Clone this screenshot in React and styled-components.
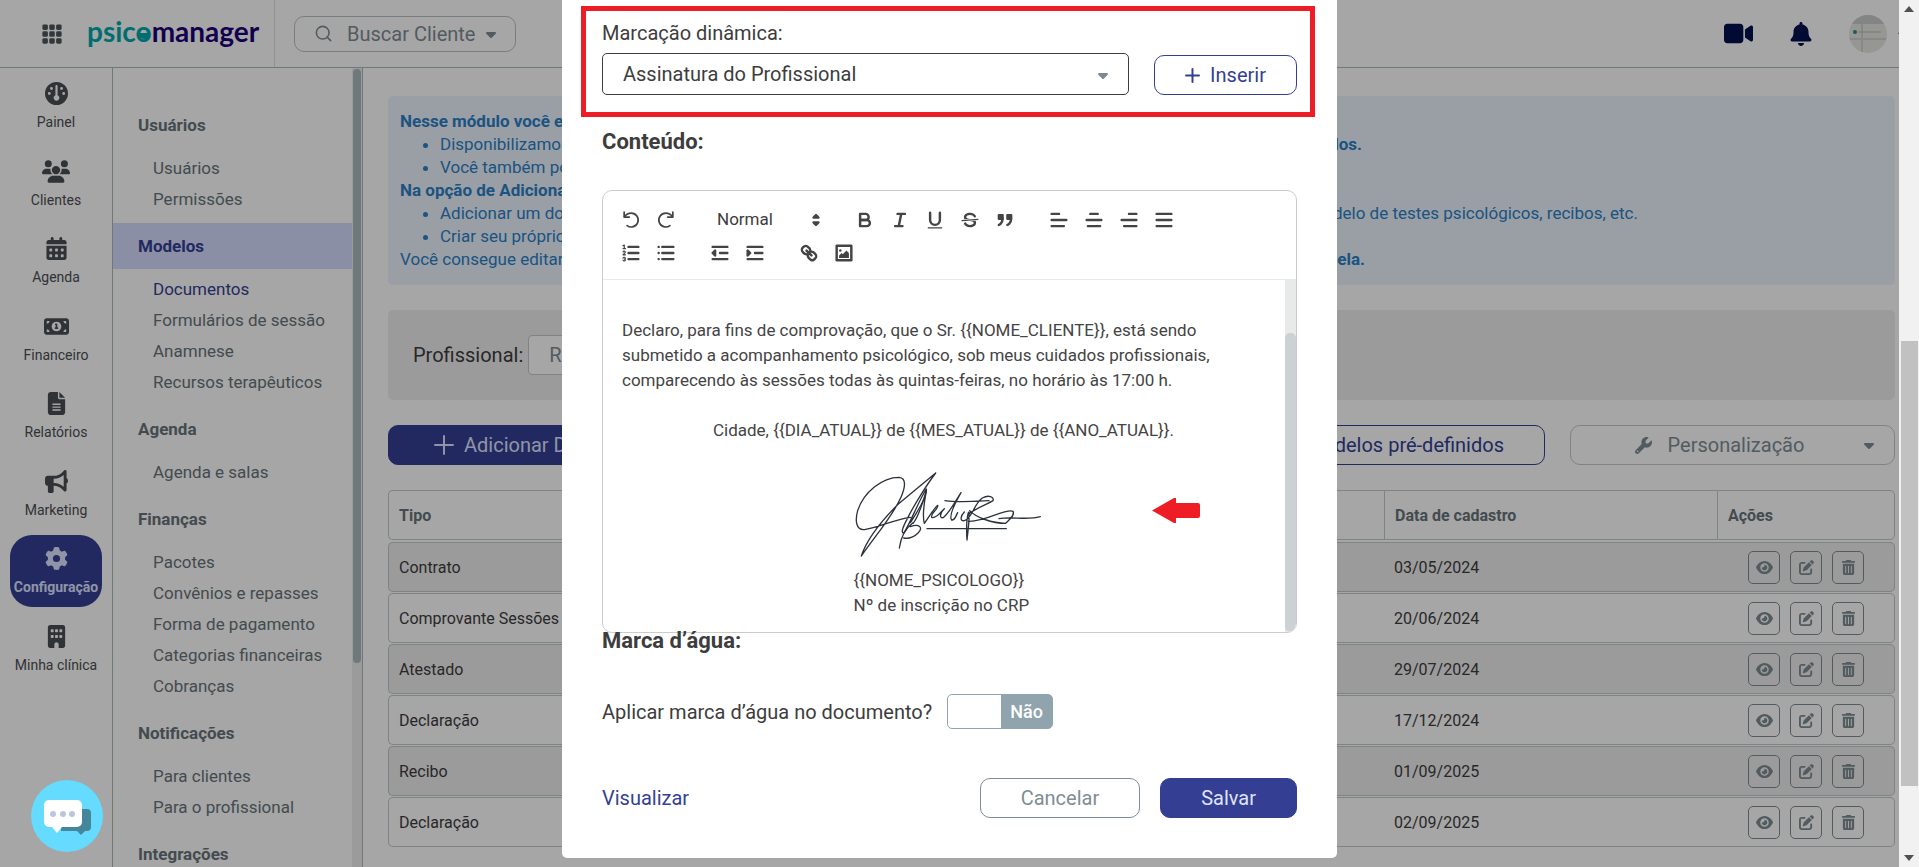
import { useState } from "react";
import styled, { createGlobalStyle, css } from "styled-components";
import {
  FaBell,
  FaBuilding,
  FaBullhorn,
  FaCalendarDays,
  FaCaretDown,
  FaEye,
  FaFileLines,
  FaGauge,
  FaGear,
  FaMoneyBill1,
  FaPenToSquare,
  FaTrashCan,
  FaUsers,
  FaVideo,
  FaWrench,
} from "react-icons/fa6";
import { BsGrid3X3GapFill } from "react-icons/bs";
import { FiSearch } from "react-icons/fi";

const colors = {
  navy: "#343f94",
  text: "#3d3d3d",
  muted: "#7f8d94",
  line: "#c2c9cc",
  menu: "#68747a",
  info: "#2b80c6",
};

const GlobalStyle = createGlobalStyle`
  * {
    box-sizing: border-box;
  }
  body {
    margin: 0;
    font-family: Roboto, "Liberation Sans", sans-serif;
    color: ${colors.text};
    background: #fff;
    overflow: hidden;
  }
  h2, h3, p, ul {
    margin: 0;
    padding: 0;
  }
  button, select, input {
    font-family: inherit;
    color: inherit;
  }
  button {
    cursor: pointer;
  }
  a {
    text-decoration: none;
  }
`;

const Window = styled.div`
  display: flex;
  height: 100vh;
`;

const Page = styled.div`
  position: relative;
  flex: 1;
  min-width: 0;
  display: flex;
  flex-direction: column;
  overflow: hidden;
`;

/* ---------- window scrollbar ---------- */

const PageScroll = styled.div`
  width: 20px;
  background: #f1f1f1;
  display: flex;
  flex-direction: column;
  justify-content: space-between;
  align-items: center;
  padding: 6px 0;
`;

const PageThumb = styled.div`
  width: 17px;
  height: 52%;
  margin-top: 329px;
  margin-bottom: auto;
  background: #c1c1c1;
`;

const ScrollArrow = styled.svg`
  width: 10px;
  height: 6px;
  fill: #505050;
`;

/* ---------- header ---------- */

const TopBar = styled.header`
  display: flex;
  align-items: center;
  height: 68px;
  flex-shrink: 0;
  border-bottom: 1px solid #abb8bd;
`;

const Brand = styled.div`
  display: flex;
  align-items: center;
  align-self: stretch;
  gap: 24px;
  width: 275px;
  padding-left: 41px;
  border-right: 1px solid #dde1e3;
`;

const LogoText = styled.div`
  padding-bottom: 6px;
  font-family: Lato, sans-serif;
  font-size: 28px;
  font-weight: 700;
  line-height: 36px;
  color: #1d007a;
`;

const LogoAccent = styled.span`
  color: #00a9ad;
`;

/* the "o" has the lower half of its bowl filled */
const LogoBowl = styled.span`
  position: relative;
  &::after {
    content: "";
    position: absolute;
    left: 3px;
    bottom: 9px;
    width: 11px;
    height: 6px;
    border-radius: 0 0 6px 6px;
    background: #00a9ad;
  }
`;

const PlainButton = styled.button`
  display: flex;
  padding: 0;
  border: none;
  background: none;
  color: ${(p) => p.$color || "#4d5659"};
`;

const SearchButton = styled.button`
  display: flex;
  align-items: center;
  width: 222px;
  height: 36px;
  margin-left: 19px;
  padding: 0 19px;
  border: 1px solid #b9c2c5;
  border-radius: 10px;
  background: none;
  color: ${colors.muted};
  font-size: 20px;
  white-space: nowrap;
  span {
    margin: 0 8px 0 14px;
  }
  svg {
    flex-shrink: 0;
  }
`;

const TopActions = styled.div`
  display: flex;
  align-items: center;
  gap: 36px;
  margin-left: auto;
`;

const Avatar = styled.svg`
  width: 38px;
  height: 38px;
  border-radius: 50%;
`;

const AvatarGroup = styled.div`
  display: flex;
  align-items: center;
  gap: 9px;
  width: 50px;
  overflow: hidden;
  svg {
    flex-shrink: 0;
  }
`;

/* ---------- side navigation ---------- */

const Body = styled.div`
  display: flex;
  flex: 1;
  min-height: 0;
`;

const NavRail = styled.nav`
  width: 113px;
  flex-shrink: 0;
  padding: 2px 10px;
  border-right: 1px solid #abb8bd;
`;

const NavList = styled.ul`
  height: 615px;
  display: flex;
  flex-direction: column;
  justify-content: space-between;
  list-style: none;
`;

const NavLink = styled.a`
  display: flex;
  flex-direction: column;
  align-items: center;
  gap: 8px;
  height: 72px;
  padding-top: 12px;
  border-radius: 22px;
  font-size: 14px;
  line-height: 18px;
  white-space: nowrap;
  color: #4a4f52;
  svg {
    height: 23px;
  }
  ${(p) =>
    p.$active &&
    css`
      background: ${colors.navy};
      color: #dfe3ff;
      font-weight: 700;
    `}
`;

const SubMenu = styled.aside`
  display: flex;
  width: 250px;
  flex-shrink: 0;
  border-right: 1px solid #abb8bd;
`;

const SubMenuBody = styled.div`
  flex: 1;
  padding-top: 34px;
`;

const MenuTitle = styled.h2`
  padding-left: 25px;
  font-size: 17px;
  font-weight: 700;
  line-height: 46px;
  color: ${(p) => (p.$active ? colors.navy : colors.menu)};
  background: ${(p) => (p.$active ? "#d6dcff" : "none")};
`;

const MenuList = styled.ul`
  padding: 5px 0 8px;
  list-style: none;
`;

const MenuLink = styled.a`
  display: block;
  padding-left: 40px;
  font-size: 17px;
  line-height: 31px;
  color: ${(p) => (p.$active ? colors.navy : colors.menu)};
`;

const SubMenuTrack = styled.div`
  width: 10px;
  padding: 1px 1px 0;
  background: #efefef;
`;

const SubMenuThumb = styled.div`
  height: 594px;
  border-radius: 4px;
  background: #abb8bd;
`;

/* ---------- main area ---------- */

const Main = styled.main`
  flex: 1;
  min-width: 0;
  display: flex;
  flex-direction: column;
  gap: 25px;
  padding: 28px 4px 0 25px;
`;

const InfoBox = styled.div`
  padding: 14px 12px;
  border-radius: 5px;
  background: #edf5ff;
  color: ${colors.info};
  font-size: 17px;
  line-height: 23px;
  ul {
    padding-left: 40px;
  }
`;

const InfoLine = styled.div`
  display: flex;
  justify-content: space-between;
  max-width: ${(p) => p.$width}px;
`;

const FilterBox = styled.div`
  display: flex;
  align-items: center;
  gap: 5px;
  height: 90px;
  padding: 0 25px;
  border-radius: 5px;
  background: #efefef;
  font-size: 20px;
`;

const FilterSelect = styled.select`
  appearance: none;
  width: 420px;
  height: 40px;
  padding: 0 20px;
  border: 1px solid ${colors.line};
  border-radius: 4px;
  background: #fff;
  color: ${colors.muted};
  font-size: 20px;
`;

const Actions = styled.div`
  display: flex;
  gap: 25px;
`;

const Button = styled.button`
  display: flex;
  align-items: center;
  justify-content: center;
  gap: 10px;
  height: 40px;
  padding: 0 40px;
  border: 1px solid ${colors.navy};
  border-radius: 10px;
  background: ${(p) => (p.$solid ? colors.navy : "none")};
  color: ${(p) => (p.$solid ? "#dfe3ff" : colors.navy)};
  font-size: 20px;
  white-space: nowrap;
`;

const AddButton = styled(Button)`
  margin-right: auto;
  padding: 0 45px;
`;

const GrayButton = styled(Button)`
  border-color: ${colors.muted};
  color: ${colors.muted};
`;

const CustomizeButton = styled(GrayButton)`
  width: 325px;
  padding: 0 17px;
  border-color: ${colors.line};
  span {
    display: flex;
    flex: 1;
    align-items: center;
    justify-content: center;
    gap: 16px;
  }
`;

const Table = styled.table`
  width: 100%;
  margin-top: -1px;
  border-collapse: separate;
  border-spacing: 0 1px;
  table-layout: fixed;
  font-size: 16px;
  text-align: left;
  th,
  td {
    height: 50px;
    padding: 0 10px;
    border: 0 solid ${colors.line};
    border-width: 1px 0;
  }
  th {
    border-left-width: 1px;
    color: ${colors.menu};
  }
  th:first-child,
  td:first-child {
    border-left-width: 1px;
    border-radius: 5px 0 0 5px;
  }
  th:last-child,
  td:last-child {
    border-right-width: 1px;
    border-radius: 0 5px 5px 0;
  }
  tbody::before {
    content: "";
    display: block;
  }
  tbody tr:nth-child(odd) {
    background: #efefef;
  }
`;

const Column = styled.col`
  width: ${(p) => p.$width}px;
`;

const RowActions = styled.div`
  display: flex;
  gap: 10px;
  padding-left: 21px;
`;

const IconButton = styled.button`
  display: flex;
  align-items: center;
  justify-content: center;
  width: 32px;
  height: 33px;
  padding: 0;
  border: 1px solid ${colors.muted};
  border-radius: 5px;
  background: none;
  color: ${colors.muted};
`;

/* ---------- modal ---------- */

const Overlay = styled.div`
  position: absolute;
  inset: 0;
  display: flex;
  justify-content: center;
  align-items: flex-start;
  background: rgba(0, 0, 0, 0.35);
`;

const Modal = styled.div`
  position: relative;
  width: 775px;
  padding: 0 40px 40px;
  border-radius: 0 0 5px 5px;
  background: #fff;
`;

const Highlight = styled.section`
  margin: 6px -18px 10px -21px;
  padding: 9px 13px 17px 16px;
  border: 5px solid #ee1c24;
`;

const FieldLabel = styled.label`
  font-size: 20px;
  line-height: 26px;
`;

const FieldRow = styled.div`
  display: flex;
  align-items: flex-end;
  gap: 25px;
  margin-top: 7px;
`;

const SelectWrap = styled.div`
  position: relative;
  flex: 1;
  height: 42px;
  svg {
    position: absolute;
    right: 18px;
    top: 14px;
    color: #7b8a91;
    pointer-events: none;
  }
`;

const Select = styled.select`
  appearance: none;
  width: 100%;
  height: 100%;
  padding: 0 20px;
  border: 1px solid ${colors.text};
  border-radius: 5px;
  background: #fff;
  font-size: 20px;
`;

const InsertButton = styled(Button)`
  width: 143px;
  padding: 0;
`;

const SectionTitle = styled.h3`
  font-size: 22px;
  font-weight: 700;
  line-height: 30px;
`;

const Editor = styled.div`
  margin: 33px 0 -7px;
  border: 1px solid #ccc;
  border-radius: 10px;
  overflow: hidden;
`;

const Toolbar = styled.div`
  display: flex;
  flex-wrap: wrap;
  column-gap: 19px;
  padding: 12px 40px 10px 10px;
  border-bottom: 1px solid #e8e8e8;
`;

const ToolGroup = styled.div`
  display: flex;
  align-items: center;
`;

const ToolButton = styled.button`
  display: flex;
  align-items: center;
  justify-content: center;
  width: 35px;
  height: 33px;
  padding: 0;
  border: none;
  background: none;
`;

const ToolSvg = styled.svg`
  width: 22px;
  height: 22px;
  fill: none;
  stroke: #444;
  stroke-width: 2;
  stroke-linecap: round;
  stroke-linejoin: round;
  .fill {
    fill: #444;
    stroke: none;
  }
  .solid {
    fill: #444;
  }
  .thin {
    stroke-width: 1;
  }
`;

const Picker = styled.div`
  position: relative;
  width: 126px;
  svg {
    position: absolute;
    right: 1px;
    top: 6px;
    pointer-events: none;
  }
`;

const PickerSelect = styled.select`
  appearance: none;
  width: 100%;
  height: 32px;
  padding: 0 15px;
  border: none;
  background: none;
  font-size: 17px;
`;

const EditorArea = styled.div`
  display: flex;
`;

const Document = styled.div`
  flex: 1;
  padding: 13px 20px 14px 19px;
  font-size: 17px;
  line-height: 25px;
  color: #444;
  outline: none;
  p {
    min-height: 25px;
  }
`;

const Centered = styled.p`
  text-align: center;
`;

const SignBlock = styled.div`
  width: fit-content;
  margin: 0 auto;
`;

const Signature = styled.svg`
  display: block;
  width: 180px;
  height: 100px;
  overflow: visible;
  fill: none;
  stroke: #2c323c;
  stroke-width: 4;
  stroke-linecap: round;
  stroke-linejoin: round;
`;

const EditorTrack = styled.div`
  width: 11px;
  display: flex;
  flex-direction: column;
  justify-content: flex-end;
  background: #e8eaea;
`;

const EditorThumb = styled.div`
  height: 85%;
  border-radius: 5px;
  background: #ccd2d4;
`;

const RedArrow = styled.svg`
  position: absolute;
  left: 590px;
  top: 498px;
  width: 48px;
  height: 25px;
  fill: #ee1c24;
`;

const ToggleRow = styled.div`
  display: flex;
  align-items: center;
  gap: 15px;
  margin-top: 38px;
`;

const Toggle = styled.span`
  position: relative;
  display: flex;
  align-items: center;
  justify-content: center;
  width: 106px;
  height: 35px;
  padding-left: ${(p) => (p.$on ? "0" : "53px")};
  padding-right: ${(p) => (p.$on ? "53px" : "0")};
  border: 1px solid #90a4ad;
  border-radius: 5px;
  background: linear-gradient(
    90deg,
    ${(p) => (p.$on ? "#343f94 52px, #fff 52px" : "#fff 53px, #90a4ad 53px")}
  );
  color: #fff;
  font-size: 18px;
  font-weight: 500;
  input {
    position: absolute;
    inset: 0;
    width: 100%;
    height: 100%;
    margin: 0;
    opacity: 0;
    cursor: pointer;
  }
`;

const Footer = styled.div`
  display: flex;
  align-items: center;
  gap: 20px;
  margin-top: 49px;
`;

const PreviewLink = styled.a`
  margin-right: auto;
  color: ${colors.navy};
  font-size: 20px;
`;

const ChatButton = styled.button`
  position: absolute;
  left: 31px;
  bottom: 15px;
  width: 72px;
  height: 72px;
  padding: 0;
  border: none;
  border-radius: 50%;
  background: #64dbff;
`;

/* ---------- drawings ---------- */

const Logo = () => (
  <LogoText>
    <LogoAccent>
      psic<LogoBowl>o</LogoBowl>
    </LogoAccent>
    manager
  </LogoText>
);

const Plus = ({ size, width = 2 }) => (
  <svg
    width={size}
    height={size}
    viewBox={`0 0 ${size} ${size}`}
    stroke="currentColor"
    strokeWidth={width}
    strokeLinecap="round"
  >
    <path d={`M${size / 2} 1V${size - 1}M1 ${size / 2}H${size - 1}`} />
  </svg>
);

const tools = {
  undo: (
    <g strokeWidth="1.4">
      <path d="M3.4 2.6v4h4.2" />
      <path d="M3.8 6.3C5 4.4 7 3.3 9.2 3.3a5.7 5.7 0 1 1-3.4 10.3" />
    </g>
  ),
  redo: (
    <g strokeWidth="1.4">
      <path d="M14.6 2.6v4h-4.2" />
      <path d="M14.2 6.3C13 4.4 11 3.3 8.8 3.3a5.7 5.7 0 1 0 3.4 10.3" />
    </g>
  ),
  bold: (
    <>
      <path d="M5,4H9.5A2.5,2.5,0,0,1,12,6.5v0A2.5,2.5,0,0,1,9.5,9H5Z" />
      <path d="M5,9h5.5A2.5,2.5,0,0,1,13,11.5v0A2.5,2.5,0,0,1,10.5,14H5Z" />
    </>
  ),
  italic: <path d="M7 4h6M5 14h6M8 14L10 4" />,
  underline: (
    <>
      <path d="M5,3V9a4,4,0,0,0,8,0V3" />
      <rect className="fill" x="3" y="15" width="12" height="1" rx=".5" />
    </>
  ),
  strike: (
    <>
      <path className="thin" d="M15.5 8.5L2.5 9.5" />
      <path
        className="fill"
        d="M9.007,8C6.542,7.791,6,7.519,6,6.5,6,5.792,7.283,5,9,5c1.571,0,2.765.679,2.969,1.309a1,1,0,0,0,1.9-.617C13.356,4.106,11.354,3,9,3,6.2,3,4,4.538,4,6.5a3.2,3.2,0,0,0,.5,1.843Z"
      />
      <path
        className="fill"
        d="M8.984,10C11.457,10.208,12,10.479,12,11.5c0,0.708-1.283,1.5-3,1.5-1.571,0-2.765-.679-2.969-1.309a1,1,0,1,0-1.9.617C4.644,13.894,6.646,15,9,15c2.8,0,5-1.538,5-3.5a3.2,3.2,0,0,0-.5-1.843Z"
      />
    </>
  ),
  quote: (
    <>
      <rect className="solid" x="4" y="5" width="3" height="3" />
      <rect className="solid" x="11" y="5" width="3" height="3" />
      <path className="solid" d="M7,8c0,4.031-3,5-3,5" />
      <path className="solid" d="M14,8c0,4.031-3,5-3,5" />
    </>
  ),
  left: <path d="M3 9h12M3 14h10M3 4h6" />,
  center: <path d="M3 9h12M4 14h10M6 4h6" />,
  right: <path d="M3 9h12M5 14h10M9 4h6" />,
  justify: <path d="M3 9h12M3 14h12M3 4h12" />,
  ordered: (
    <>
      <path d="M7 4h8M7 9h8M7 14h8" />
      <path className="thin" d="M2.5 5.5h2M2.5 3l1-.5v3" />
      <path className="thin" d="M4.5,10.5h-2c0-.234,1.85-1.076,1.85-2.234A0.959,0.959,0,0,0,2.5,8.156" />
      <path
        className="thin"
        d="M2.5,14.846a0.959,0.959,0,0,0,1.85-.109A0.7,0.7,0,0,0,3.75,14a0.688,0.688,0,0,0,.6-0.736,0.959,0.959,0,0,0-1.85-.109"
      />
    </>
  ),
  bullet: <path d="M6 4h9M6 9h9M6 14h9M3 4h0M3 9h0M3 14h0" />,
  outdent: (
    <>
      <path d="M3 14h12M3 4h12M9 9h6" />
      <path className="solid" d="M5 7v4L3 9z" />
    </>
  ),
  indent: (
    <>
      <path d="M3 14h12M3 4h12M9 9h6" />
      <path className="solid" d="M3 7v4l2-2z" />
    </>
  ),
  link: (
    <>
      <path d="M7 7l4 4" />
      <path d="M8.9,4.577a3.476,3.476,0,0,1,.36,4.679A3.476,3.476,0,0,1,4.577,8.9C3.185,7.5,2.035,6.4,4.217,4.217S7.5,3.185,8.9,4.577Z" />
      <path d="M13.423,9.1a3.476,3.476,0,0,0-4.679-.36,3.476,3.476,0,0,0,.36,4.679c1.392,1.392,2.5,2.542,4.679.36S14.815,10.5,13.423,9.1Z" />
    </>
  ),
  image: (
    <>
      <rect x="3" y="3" width="12" height="12" />
      <circle className="fill" cx="6" cy="7" r="1" />
      <path className="fill" d="M5 13v-2l2-2 1 1 3-3 2 2v4z" />
    </>
  ),
};

const Tool = ({ name }) => (
  <ToolButton type="button" aria-label={name}>
    <ToolSvg viewBox="0 0 18 18">{tools[name]}</ToolSvg>
  </ToolButton>
);

const SignatureDrawing = () => (
  <Signature viewBox="45 24 540 300" aria-label="Assinatura">
    <path d="M214 172C170 178 120 200 80 208C50 214 48 180 56 152C74 96 130 52 180 52C204 54 198 84 186 112C160 170 110 226 67 288C84 236 130 180 178 132L290 39C262 76 222 140 204 178C190 204 186 218 194 220C214 190 240 120 262 87C266 110 232 160 214 188" />
    <path d="M181 264C186 226 206 200 222 188M214 200C240 190 254 202 238 218C224 232 206 236 194 234" />
    <path d="M222 190C240 170 250 130 262 92C256 130 248 164 256 190C264 180 284 146 296 136C300 146 274 160 278 172C292 178 308 152 316 146C300 160 302 178 314 172C334 154 350 122 366 98C350 126 328 168 338 180C348 182 352 164 356 158" />
    <path d="M318 122C360 128 410 124 450 122M376 156C364 168 362 184 376 182C400 176 404 132 430 114C448 104 466 110 462 122C446 132 416 142 392 160M390 156C392 190 386 214 384 240C382 210 382 180 388 158" />
    <path d="M392 152C410 172 460 190 500 190C512 178 528 166 522 154C500 144 440 186 388 184M480 176C520 168 560 182 604 170M264 206H502" />
  </Signature>
);

/* ---------- data ---------- */

const nav = [
  ["Painel", FaGauge, 23],
  ["Clientes", FaUsers, 28],
  ["Agenda", FaCalendarDays, 23],
  ["Financeiro", FaMoneyBill1, 25],
  ["Relatórios", FaFileLines, 23],
  ["Marketing", FaBullhorn, 23],
  ["Configuração", FaGear, 23],
  ["Minha clínica", FaBuilding, 23],
];

const menu = [
  ["Usuários", ["Usuários", "Permissões"]],
  ["Modelos", ["Documentos", "Formulários de sessão", "Anamnese", "Recursos terapêuticos"]],
  ["Agenda", ["Agenda e salas"]],
  [
    "Finanças",
    ["Pacotes", "Convênios e repasses", "Forma de pagamento", "Categorias financeiras", "Cobranças"],
  ],
  ["Notificações", ["Para clientes", "Para o profissional"]],
  ["Integrações", []],
];

const rows = [
  ["Contrato", "03/05/2024"],
  ["Comprovante Sessões", "20/06/2024"],
  ["Atestado", "29/07/2024"],
  ["Declaração", "17/12/2024"],
  ["Recibo", "01/09/2025"],
  ["Declaração", "02/09/2025"],
];

const statement =
  "Declaro, para fins de comprovação, que o Sr. {{NOME_CLIENTE}}, está sendo submetido a acompanhamento psicológico, sob meus cuidados profissionais, comparecendo às sessões todas às quintas-feiras, no horário às 17:00 h.";

const Header = () => (
  <TopBar>
    <Brand>
      <PlainButton aria-label="Aplicativos">
        <BsGrid3X3GapFill size={22} />
      </PlainButton>
      <Logo />
    </Brand>
    <SearchButton>
      <FiSearch size={19} />
      <span>Buscar Cliente</span>
      <FaCaretDown size={16} />
    </SearchButton>
    <TopActions>
      <PlainButton $color="#00104d" aria-label="Vídeo">
        <FaVideo size={29} />
      </PlainButton>
      <PlainButton $color="#00104d" aria-label="Notificações">
        <FaBell size={24} />
      </PlainButton>
      <AvatarGroup>
        <Avatar viewBox="0 0 38 38">
          <rect width="38" height="38" fill="#e6e6e2" />
          <rect width="38" height="9" fill="#c9cccb" />
          <path d="M0 24h38M13 9v29" stroke="#cfd1cf" strokeWidth="2" />
          <path d="M9 17h23" stroke="#b9bcba" />
          <circle cx="6" cy="17" r="2" fill="#1f8d97" />
        </Avatar>
        <FaCaretDown size={12} />
      </AvatarGroup>
    </TopActions>
  </TopBar>
);

const SideMenus = () => (
  <>
    <NavRail>
      <NavList>
        {nav.map(([label, Icon, size]) => (
          <li key={label}>
            <NavLink href="#" $active={label === "Configuração"}>
              <Icon size={size} />
              {label}
            </NavLink>
          </li>
        ))}
      </NavList>
    </NavRail>
    <SubMenu>
      <SubMenuBody>
        {menu.map(([title, links]) => (
          <div key={title}>
            <MenuTitle $active={title === "Modelos"}>{title}</MenuTitle>
            <MenuList>
              {links.map((link) => (
                <li key={link}>
                  <MenuLink href="#" $active={link === "Documentos"}>
                    {link}
                  </MenuLink>
                </li>
              ))}
            </MenuList>
          </div>
        ))}
      </SubMenuBody>
      <SubMenuTrack>
        <SubMenuThumb />
      </SubMenuTrack>
    </SubMenu>
  </>
);

const Models = () => (
  <Main>
    <InfoBox>
      <strong>Nesse módulo você encontra</strong>
      <ul>
        <li>
          <InfoLine $width={922}>
            <span>Disponibilizamos</span>
            <strong>modelos.</strong>
          </InfoLine>
        </li>
        <li>Você também pode</li>
      </ul>
      <strong>Na opção de Adicionar</strong>
      <ul>
        <li>
          <InfoLine $width={1198}>
            <span>Adicionar um documento</span>
            <span>modelo de testes psicológicos, recibos, etc.</span>
          </InfoLine>
        </li>
        <li>Criar seu próprio</li>
      </ul>
      <InfoLine $width={965}>
        <span>Você consegue editar</span>
        <strong>tabela.</strong>
      </InfoLine>
    </InfoBox>
    <FilterBox>
      <label htmlFor="professional">Profissional:</label>
      <FilterSelect id="professional">
        <option>R</option>
      </FilterSelect>
    </FilterBox>
    <Actions>
      <AddButton $solid>
        <Plus size={20} />
        Adicionar Documento
      </AddButton>
      <Button>Modelos pré-definidos</Button>
      <CustomizeButton>
        <span>
          <FaWrench size={17} />
          Personalização
        </span>
        <FaCaretDown size={16} />
      </CustomizeButton>
    </Actions>
    <Table>
      <colgroup>
        <Column $width={300} />
        <col />
        <Column $width={333} />
        <Column $width={178} />
      </colgroup>
      <thead>
        <tr>
          <th>Tipo</th>
          <th aria-label="Nome" />
          <th>Data de cadastro</th>
          <th>Ações</th>
        </tr>
      </thead>
      <tbody>
        {rows.map(([type, date]) => (
          <tr key={date}>
            <td>{type}</td>
            <td />
            <td>{date}</td>
            <td>
              <RowActions>
                <IconButton aria-label="Visualizar">
                  <FaEye size={17} />
                </IconButton>
                <IconButton aria-label="Editar">
                  <FaPenToSquare size={15} />
                </IconButton>
                <IconButton aria-label="Excluir">
                  <FaTrashCan size={15} />
                </IconButton>
              </RowActions>
            </td>
          </tr>
        ))}
      </tbody>
    </Table>
  </Main>
);

const EditModal = () => {
  const [watermark, setWatermark] = useState(false);

  return (
    <Modal role="dialog">
      <Highlight>
        <FieldLabel htmlFor="tag">Marcação dinâmica:</FieldLabel>
        <FieldRow>
          <SelectWrap>
            <Select id="tag">
              <option>Assinatura do Profissional</option>
            </Select>
            <FaCaretDown size={16} />
          </SelectWrap>
          <InsertButton>
            <Plus size={15} />
            Inserir
          </InsertButton>
        </FieldRow>
      </Highlight>
      <SectionTitle>Conteúdo:</SectionTitle>
      <Editor>
        <Toolbar>
          <ToolGroup>
            <Tool name="undo" />
            <Tool name="redo" />
          </ToolGroup>
          <Picker>
            <PickerSelect aria-label="Formato">
              <option>Normal</option>
            </PickerSelect>
            <ToolSvg viewBox="0 0 18 18">
              <path className="solid" d="M7 11l2 2 2-2zM7 7l2-2 2 2z" />
            </ToolSvg>
          </Picker>
          <ToolGroup>
            <Tool name="bold" />
            <Tool name="italic" />
            <Tool name="underline" />
            <Tool name="strike" />
            <Tool name="quote" />
          </ToolGroup>
          <ToolGroup>
            <Tool name="left" />
            <Tool name="center" />
            <Tool name="right" />
            <Tool name="justify" />
          </ToolGroup>
          <ToolGroup>
            <Tool name="ordered" />
            <Tool name="bullet" />
          </ToolGroup>
          <ToolGroup>
            <Tool name="outdent" />
            <Tool name="indent" />
          </ToolGroup>
          <ToolGroup>
            <Tool name="link" />
            <Tool name="image" />
          </ToolGroup>
        </Toolbar>
        <EditorArea>
          <Document contentEditable suppressContentEditableWarning spellCheck={false}>
            <p />
            <p>{statement}</p>
            <p />
            <Centered>{"Cidade, {{DIA_ATUAL}} de {{MES_ATUAL}} de {{ANO_ATUAL}}."}</Centered>
            <p />
            <SignBlock>
              <SignatureDrawing />
              <p>{"{{NOME_PSICOLOGO}}"}</p>
              <p>Nº de inscrição no CRP</p>
            </SignBlock>
          </Document>
          <EditorTrack>
            <EditorThumb />
          </EditorTrack>
        </EditorArea>
      </Editor>
      <SectionTitle>Marca d’água:</SectionTitle>
      <ToggleRow>
        <FieldLabel htmlFor="watermark">Aplicar marca d’água no documento?</FieldLabel>
        <Toggle $on={watermark}>
          {watermark ? "Sim" : "Não"}
          <input
            id="watermark"
            type="checkbox"
            checked={watermark}
            onChange={(e) => setWatermark(e.target.checked)}
          />
        </Toggle>
      </ToggleRow>
      <Footer>
        <PreviewLink href="#">Visualizar</PreviewLink>
        <GrayButton>Cancelar</GrayButton>
        <Button $solid>Salvar</Button>
      </Footer>
      <RedArrow viewBox="0 0 48 25">
        <path d="M0 12.5L22 0h2v5h22a2 2 0 0 1 2 2v11a2 2 0 0 1-2 2H24v5h-2z" />
      </RedArrow>
    </Modal>
  );
};

const App = () => {
  return (
    <Window>
      <GlobalStyle />
      <Page>
        <Header />
        <Body>
          <SideMenus />
          <Models />
        </Body>
        <Overlay>
          <EditModal />
        </Overlay>
        <ChatButton aria-label="Chat">
          <svg width="72" height="72" viewBox="0 0 72 72">
            <path d="M30 29h26a4 4 0 0 1 4 4v14a4 4 0 0 1-4 4h-2l-4 4-4-4H30z" fill="#46869b" />
            <path
              d="M18 20h28a5 5 0 0 1 5 5v17a5 5 0 0 1-5 5H31l-5 6-5-6h-3a5 5 0 0 1-5-5V25a5 5 0 0 1 5-5z"
              fill="#fff"
            />
            <g fill="#b9c6dc">
              <circle cx="22" cy="34" r="3" />
              <circle cx="32" cy="34" r="3" />
              <circle cx="41" cy="34" r="3" />
            </g>
          </svg>
        </ChatButton>
      </Page>
      <PageScroll>
        <ScrollArrow viewBox="0 0 10 6">
          <path d="M0 6l5-6 5 6z" />
        </ScrollArrow>
        <PageThumb />
        <ScrollArrow viewBox="0 0 10 6">
          <path d="M0 0l5 6 5-6z" />
        </ScrollArrow>
      </PageScroll>
    </Window>
  );
};

export default App;
